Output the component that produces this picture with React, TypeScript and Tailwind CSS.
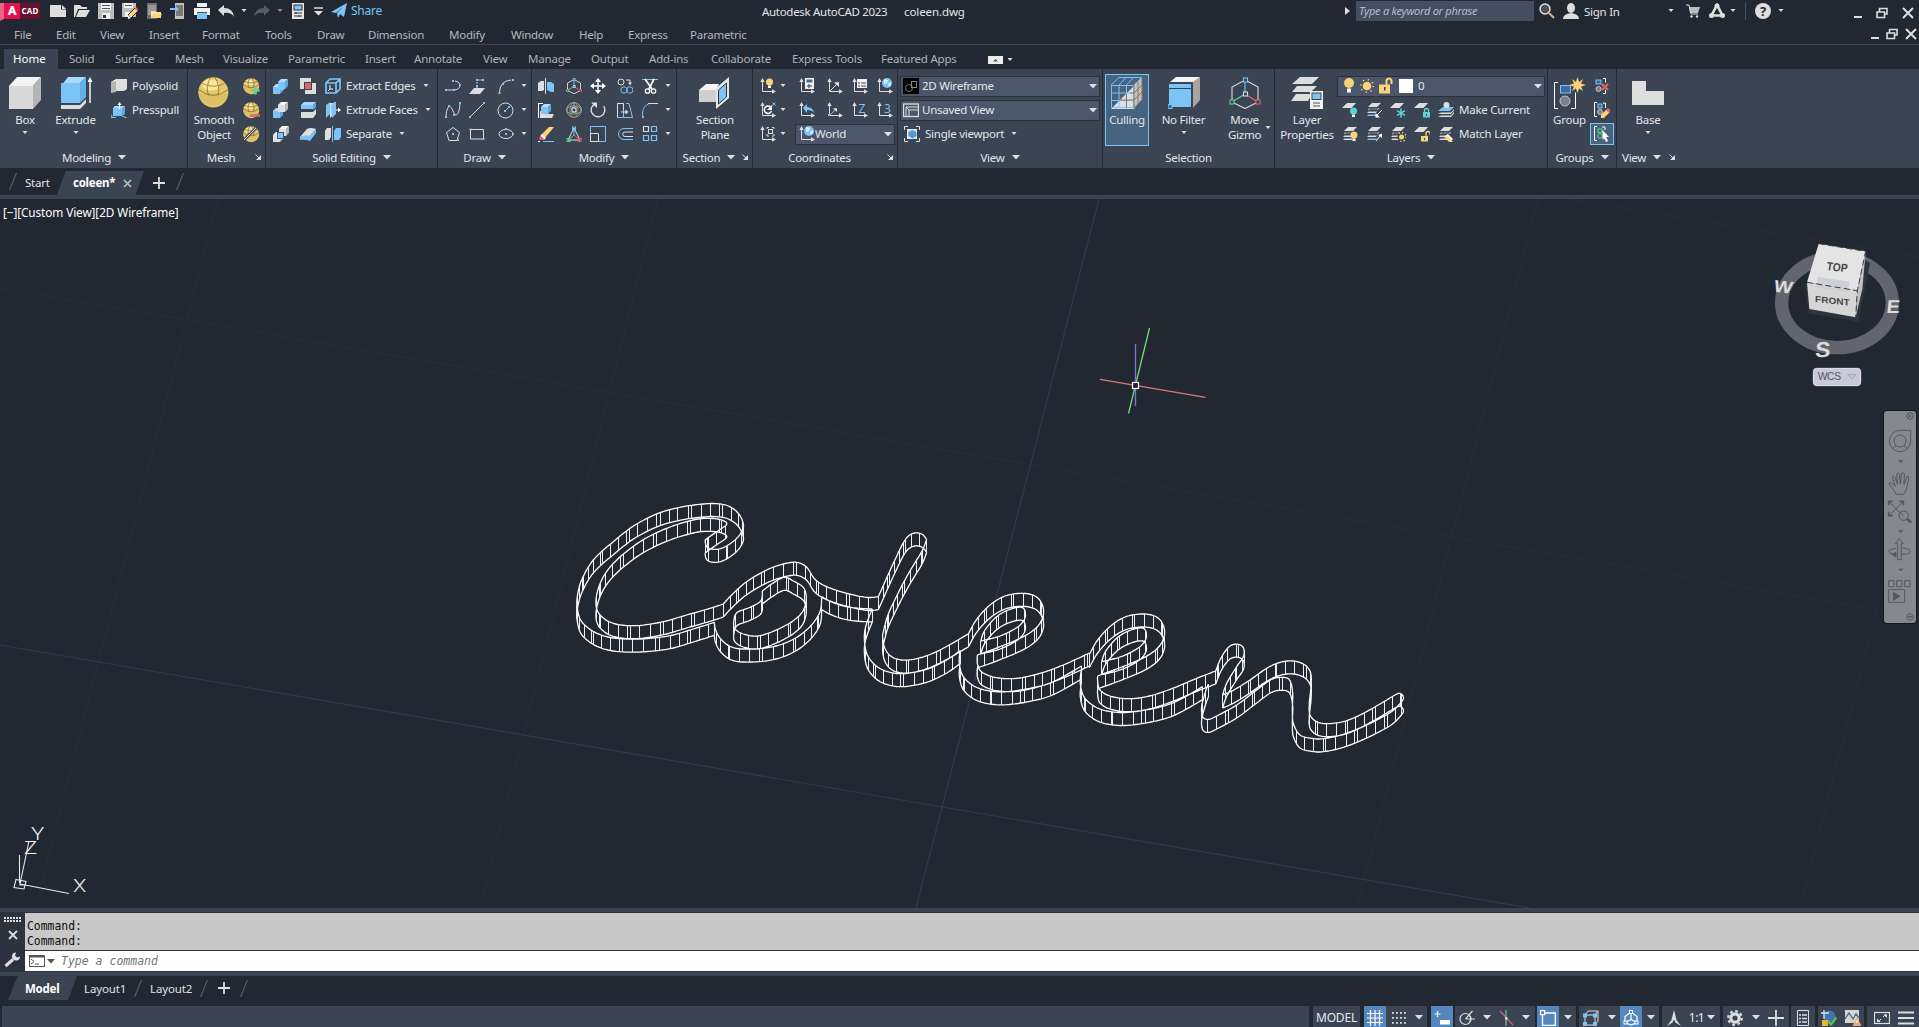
import React from "react";

const B = "#7cc4f8";
const W = "#dedede";
const Y = "#fbd277";
const G = "#63d08c";
const R = "#e0646a";

type P = { children?: React.ReactNode; s?: number; c?: string };

/* ---------- icon primitives ---------- */
const I = ({ children, s = 16, c = "" }: P) => (
  <svg width={s} height={s} viewBox={`0 0 ${s} ${s}`} fill="none" className={`shrink-0 ${c}`}>
    {children}
  </svg>
);
const L = ({ d, c = W, w = 1 }: { d: string; c?: string; w?: number }) => <path d={d} stroke={c} strokeWidth={w} />;
const F = ({ d, c = W }: { d: string; c?: string }) => <path d={d} fill={c} />;
const Dots = ({ p, c = B }: { p: number[][]; c?: string }) => (
  <>
    {p.map(([x, y], i) => (
      <rect key={i} x={x - 1} y={y - 1} width="2" height="2" fill={c} />
    ))}
  </>
);
const Down = ({ big = false }: { big?: boolean }) =>
  big ? (
    <svg width="8" height="5" className="shrink-0"><path d="M0 0h8l-4 4.5z" fill="#dcdfe4" /></svg>
  ) : (
    <svg width="6" height="4" className="shrink-0"><path d="M0.5 0h5l-2.5 3z" fill="#dcdfe4" /></svg>
  );
const Corner = () => (
  <I s={8}><L d="M1.5 1.5l4 4" /><F d="M7 2v5H2z" /></I>
);
const Axes = ({ children }: P) => (
  <I s={17}>
    <L d="M3.5 3v10.500h10" />
    <F d="M3.500 0l2.200 4H1.300zM17 13.500l-4-2.200v4.400z" />
    {children}
  </I>
);
const Sheets = ({ c2 = W }: { c2?: string }) => (
  <>
    <F d="M6 1h9l-4 4H2z" />
    <F d="M4.500 6.200h9l-1.500 1.500H4l-1-.3zM3 6.500l-1 1.500h8l2.500-1.500z" />
    <F d="M2.500 9.500L1 11h8.500l2-1.500z" />
    <F d="M2.500 12.500L1 14h8.500l2-1.500z" c={c2} />
  </>
);
const Sheet1 = () => <F d="M5 1h9l-4.500 5H0z" />;
const Cubelet = ({ x, y, c, t }: { x: number; y: number; c: string; t: string }) => (
  <g transform={`translate(${x} ${y})`}>
    <F d="M0 3h7v7H0z" c={c} />
    <F d="M0 3l3-3h7L7 3z" c={t} />
    <F d="M7 3l3-3v7L7 10z" c={c === W ? "#b8b8b8" : "#5aa9e6"} />
  </g>
);
const Globe = ({ s = 16, children }: P) => (
  <I s={s}>
    <circle cx={s * 0.48} cy={s * 0.48} r={s * 0.47} fill="#e5c869" />
    <path d={`M${s * 0.02} ${s * 0.5}H${s * 0.94}A${s * 0.47} ${s * 0.47} 0 0 1 ${s * 0.02} ${s * 0.5}`} fill="#dcbf66" />
    <ellipse cx={s * 0.4} cy={s * 0.25} rx={s * 0.27} ry={s * 0.18} fill="#fbe596" />
    <path
      d={`M${s * 0.03} ${s * 0.4}Q${s * 0.48} ${s * 0.75} ${s * 0.93} ${s * 0.4}M${s * 0.13} ${s * 0.2}Q${s * 0.48} ${s * 0.38} ${s * 0.83} ${s * 0.2}M${s * 0.4} 0Q${s * 0.22} ${s * 0.3} ${s * 0.33} ${s * 0.58}M${s * 0.52} 0Q${s * 0.72} ${s * 0.3} ${s * 0.62} ${s * 0.58}`}
      stroke="#8a713a" strokeWidth="0.8"
    />
    {children}
  </I>
);
const BlueBall = ({ x = 11, y = 5 }) => (
  <>
    <circle cx={x} cy={y} r="5" fill={B} />
    <path d={`M${x - 3} ${y - 4}l4 1-1 3-3 1zM${x + 1} ${y + 1}l3-2v3l-2 2z`} fill="#d9efff" />
  </>
);
const HexGizmo = ({ s = 16 }: { s?: number }) => {
  const k = s / 32;
  return (
    <svg width={s} height={s} viewBox="0 0 32 32" fill="none" className="shrink-0">
      <g strokeWidth={Math.max(1 / k, 1.2) * 0.9}>
        <path d="M16 3l13 7v15l-13 6.500L3 25V10z" stroke={W} />
        <path d="M16 3v14" stroke={B} /><path d="M16 17L3 25" stroke={G} /><path d="M16 17l13 8" stroke={R} />
        <path d="M14.500 1h4v4h-4z" stroke={B} fill="#3b4453" /><path d="M1 23h4v4H1z" stroke={G} fill="#3b4453" />
        <path d="M27 23h4v4h-4z" stroke={R} fill="#3b4453" /><path d="M14.500 15h4v4h-4z" stroke={W} fill="#3b4453" />
      </g>
    </svg>
  );
};
const Bulb = ({ x, y, c = Y }: { x: number; y: number; c?: string }) => (
  <><circle cx={x} cy={y} r="3.500" fill={c} /><rect x={x - 1.5} y={y + 3.5} width="3" height="2.500" fill="#fff" /></>
);
const Sun = ({ x, y, r = 3 }: { x: number; y: number; r?: number }) => (
  <>
    <circle cx={x} cy={y} r={r} fill={Y} />
    <circle cx={x} cy={y} r={r + 2} stroke={Y} strokeWidth="1.600" strokeDasharray={`1.200 ${((r + 2) * 2 * Math.PI) / 8 - 1.2}`} />
  </>
);
const Lock = ({ x, y, c, open = false }: { x: number; y: number; c: string; open?: boolean }) => (
  <>
    <rect x={x} y={y} width="7" height="5.500" fill={c} />
    <path d={open ? `M${x + 5} ${y}v-2.500a2 2 0 0 1 4 0v1` : `M${x + 1.5} ${y}v-1.500a2 2 0 0 1 4 0v1.500`} stroke={c} strokeWidth="1.300" />
    <rect x={x + 3} y={y + 2} width="1" height="2" fill="#3b4453" />
  </>
);

/* ---------- icon set ---------- */
const ic = {
  box: <I s={32}><F d="M0 9L8 0h24l-8 9z" c="#f3f3f3" /><F d="M0 9h24v23H0z" c="#d9d9d9" /><F d="M24 9l8-9v23l-8 9z" c="#b5b5b5" /></I>,
  extrude: <I s={32}><F d="M0 9l7-9h18l-6 6H0z" c="#a9dbff" /><F d="M0 6h19v20H0z" c={B} /><F d="M19 6l6-6v20l-6 6z" c="#5fb1ee" /><F d="M0 28h19l6-6v4l-6 6H0z" /><L d="M29 4v22" c="#fff" w={1.4} /><F d="M29 0l2.500 5h-5z" c="#fff" /></I>,
  polysolid: <I><F d="M0 4l5-3v11l-5 3z" c="#f3f3f3" /><F d="M5 1h11v10l-3 2H5z" /><F d="M0 4l5-1v11l-5 1z" c="#b5b5b5" /></I>,
  presspull: <I><F d="M2 6h9v8H2z" c={B} /><F d="M11 6l3-2v8l-3 2z" c="#5aa9e6" /><F d="M4 4h10l-3 2H2z" c="#a9dbff" /><L d="M8.500 2v5" c="#fff" /><F d="M8.500 0l2 3h-4z" c="#fff" /><L d="M0 15.500l2-2M0 12v3.500h5M11 14l5 2" c={B} /></I>,
  union: <I><Cubelet x={5} y={1} c={B} t="#b5e0ff" /><Cubelet x={0} y={6} c={B} t="#b5e0ff" /><F d="M5 6h6v6H5z" c={B} /></I>,
  subtract: <I><Cubelet x={0} y={6} c={B} t="#b5e0ff" /><Cubelet x={5} y={0} c={W} t="#f5f5f5" /></I>,
  intersect: <I><Cubelet x={6} y={0} c={W} t="#f5f5f5" /><Cubelet x={0} y={6} c={W} t="#f5f5f5" /><rect x="4.500" y="6.500" width="6" height="6" fill={B} stroke="#2a5f8d" /></I>,
  interfere: <I><rect width="11" height="11" fill={W} /><rect x="5" y="5" width="11" height="11" fill={W} /><rect x="4.500" y="4.500" width="7" height="7" fill={R} stroke="#3b4453" /></I>,
  slice: <I><F d="M1 3l3-3h12l-3 3z" c="#a9dbff" /><F d="M1 3h12v4H1z" c={B} /><F d="M13 3l3-3v5l-3 3z" c="#5aa9e6" /><F d="M1 10h12l3-3v5l-3 4H1z" /></I>,
  thicken: <I><F d="M0 11L7 3q3-2 9 0l-6 7z" /><F d="M0 11q5-3 10-1l6-7v4l-6 8q-5-2-10-1z" c={B} /></I>,
  extractEdges: <I><L d="M1 5h10v10H1zM1 5l4-4h10l-4 4M15 1v10l-4 4" c={B} w={1.700} /><L d="M5 7v4h3M5 11l-2 2" c="#fff" /></I>,
  extrudeFaces: <I><F d="M1 3l4-3v12l-4 4z" c={B} /><F d="M5 1h4v3L7 6v8l-2 2z" c={W} /><F d="M6 4l3-4h2v12l-4 4z" c={B} /><L d="M11 8h4" c="#fff" /><F d="M16 8l-3-2.500v5z" c="#fff" /></I>,
  separate: <I><F d="M0 5l2-3h4v9l-2 3H0z" /><L d="M7.500 0v16" c={B} /><F d="M9 5l2-3h5v9l-2 3H9z" c={B} /></I>,
  polyline: <I><L d="M2 12h6M8 12c9 0 9-8 2-9" /><Dots p={[[1, 12], [9, 12], [8, 3], [15, 7]]} /></I>,
  sweep: <I><F d="M5 10h11l-5 6H0z" /><L d="M8 13V4" /><F d="M8 5l3 4H5z" c="#3b4453" /><Dots p={[[8, 2], [14, 2], [8, 8]]} /><L d="M8 2h5" c={B} /></I>,
  arc: <I><L d="M1.500 14Q2 3 13 2" /><Dots p={[[1.500, 15], [5, 6], [15, 2]]} /></I>,
  spline: <I><L d="M1 14C2 2 6 3 8 9s6 6 7-7" /><Dots p={[[1, 15], [4, 4], [9, 13], [15, 1]]} /></I>,
  line: <I><L d="M2 14L14 2" /><Dots p={[[1, 15], [15, 1]]} /></I>,
  circle: <I s={17}><circle cx="8.500" cy="8.500" r="7.500" stroke={W} /><L d="M8 9l4-4" c={B} /><Dots p={[[8, 9], [12, 5]]} /></I>,
  polygon: <I><path d="M8 1.500l6.500 5-2.500 8H4l-2.500-8z" stroke={W} /><Dots p={[[8, 8], [13, 14]]} /></I>,
  rect: <I><path d="M1.500 3.500h13v9.500h-13z" stroke={W} /><Dots p={[[1.500, 3.500], [14.500, 13]]} /></I>,
  ellipse: <I><ellipse cx="8" cy="8" rx="7" ry="4.500" stroke={W} /><Dots p={[[8, 8], [8, 3], [15, 8]]} /></I>,
  mirror: <I><F d="M0 5l3-2h3v9l-2 1H0z" /><L d="M7.500 0v16" c={W} /><F d="M9 4h4l3 2v8h-3l-4-2z" c={B} /></I>,
  align: <I><L d="M.5 1v15M1 1.500h4" c="#fff" /><F d="M2 15V9h4l2 3h8l-2 4H2z" /><Cubelet x={3} y={2} c={B} t="#b5e0ff" /></I>,
  erase: <I><F d="M3 9l8-8h5l-9 11z" c={Y} /><F d="M3 9l4 4-1 1H2l-1-2z" c={R} /><F d="M4 8l4 4-1.500 1.500L2.500 9.500z" c="#fff" /><L d="M0 15.500h2" c="#fff" /><L d="M5 15.500h11" c={B} /></I>,
  rot3d: <I><circle cx="8" cy="8" r="7.300" stroke="#aaa" /><ellipse cx="8" cy="8" rx="4" ry="7.300" stroke={R} /><ellipse cx="8" cy="8" rx="7.300" ry="4" stroke={G} /><rect x="6" y="6" width="4" height="4" stroke="#fff" /><L d="M8 0v6" c={B} /></I>,
  scale3d: <I><L d="M8 2L2 14h12z" /><L d="M8 2v7" c={B} /><L d="M8 9l-6 5" c={G} /><L d="M8 9l6 5" c={R} /><rect x="6.500" y="1" width="3" height="3" stroke={B} /><rect x="1" y="12.500" width="3" height="3" stroke={G} /><rect x="12" y="12.500" width="3" height="3" stroke={R} /></I>,
  move: <I><L d="M8 2v12M2 8h12" c="#fff" w={1.400} /><F d="M8 0l3 4H5zM8 16l3-4H5zM0 8l4-3v6zM16 8l-4-3v6z" c="#fff" /></I>,
  rotate: <I><path d="M4 2.500A6.800 6.800 0 1 0 12 2.500" transform="rotate(20 8 8)" stroke={W} strokeWidth="1.400" /><F d="M1 .5h6v5.500z" /></I>,
  scale: <I><path d="M.5.500h15v15H.5z" stroke={B} /><path d="M.5 7.500h8v8h-8z" stroke={W} fill="#3b4453" /></I>,
  copy: <I><circle cx="4" cy="4" r="3" stroke={W} /><L d="M9 2h4v3" /><F d="M13 7.500l-2-3h4z" /><circle cx="7" cy="12" r="3.200" stroke={B} /><circle cx="12.800" cy="12" r="3.200" stroke={B} /></I>,
  stretch: <I><path d="M.5 1.500h6v14h-6zM9 1.500h3l3.500 14H6" stroke={B} /><path d="M.5 15.500v-14h6V8" stroke={W} /><L d="M4 10h6" /><F d="M11.500 10l-3-2.500v5z" /></I>,
  offset: <I><path d="M16 2.500H7a5.500 5.500 0 0 0 0 11h9" stroke={B} /><path d="M16 6H8a2.200 2.200 0 0 0 0 4.500h8" stroke={W} /></I>,
  trim: <I><L d="M0 1.500h16" c={B} /><path d="M3 1l7 10M12 1L7 11" stroke="#fff" strokeWidth="1.700" /><circle cx="5.500" cy="13" r="2.200" stroke="#fff" strokeWidth="1.300" /><circle cx="11.500" cy="13" r="2.200" stroke="#fff" strokeWidth="1.300" /></I>,
  fillet: <I><L d="M.5 15V11Q1 4 7 1.500" c={B} /><L d="M6 1.500h10" /><Dots p={[[.8, 15]]} /></I>,
  array: <I><path d="M1.500.500h5v5h-5zM9.500.500h5v5h-5zM1.500 9.500h5v5h-5zM9.500 9.500h5v5h-5z" stroke={B} strokeWidth="1.200" /><path d="M1.500.500h5v5h-5z" stroke={W} /></I>,
  section: <I s={32}><F d="M0 13L7 7h13l-3 6z" c="#f5f5f5" /><F d="M0 13h17v12H0z" c="#cfcfcf" /><F d="M17 11L30 0v21L17 32z" c="#e8e8e8" /><F d="M19.500 13L27.500 6v14l-8 7z" c={B} /><path d="M19.500 13L27.500 6v14l-8 7z" stroke="#333" /></I>,
  culling: <I s={32}><F d="M0 32l20-20 11-12v22l-8 10z" c="#dedede" /><F d="M23 8l8-8v22l-8 9z" c="#c9c2bb" /><path d="M.5 8.500h22v22H.5zM8 8v23M15.500 8v23M0 16h23M0 23.500h23M0 8l8-7.500h23L23 8M8 8l7-7.500M15.500 8l7-7.500M23 16l8-8M23 23l8-8" stroke={B} /><path d="M15.500 17v14M23 8v23M8 23h15M19 16h4M31 .5v22L23 31M27 4v23M23 23l8-8M23 16l8-8" stroke="#7e7671" /></I>,
  nofilter: <I s={32}><F d="M2 5l6-5h24l-6 5z" c="#f5f5f5" /><F d="M25 5l7-5v23l-7 8z" c="#aaa49f" /><F d="M1 7h22v4H1z" c={B} /><F d="M1 12h22v18H1z" c={B} /><rect x="0" y="27.500" width="4" height="4" fill="#3b6c99" stroke={B} /></I>,
  layerProps: <I s={32}><F d="M9 0h19l-7 7H1z" /><F d="M6 9h20l-6 6H1z" /><F d="M5 17h16l-4 7H0z" /><rect x="19" y="14" width="13" height="18" fill="#f2f2f2" /><rect x="21" y="16" width="9" height="6.500" fill={B} stroke="#444" /><L d="M22 26h7M22 29h7" c="#555" /></I>,
  groupBig: <I s={32}><L d="M4 5.500H.5v26H4M17 31.500h4.500v-16" c="#fff" /><rect x="6.500" y="8.500" width="10" height="7.500" fill="#3d6c9c" stroke={B} /><circle cx="11" cy="24" r="5" fill="#7a7f88" stroke="#c0c4ca" /><path d="M23.500 0l1.600 5 4-3-2.100 4.500 5 1.500-5 1.700 2.100 4.300-4-2.500-1.600 4.500-1.600-4.500-4 2.500 2.100-4.300-5-1.700 5-1.500L17.900 2l4 3z" fill={Y} /></I>,
  base: <I s={32}><F d="M0 4h14v10h18v14H0z" /></I>,
  makeCurrent: <I><F d="M5 5h11l-4 4H0z" c={B} /><F d="M3 10.500h10l3-3.500v1.500L13 12H0zM3 13.500h10l3-3.500v1.500L13 15H0z" /><circle cx="8.500" cy="3" r="3" fill={W} /></I>,
  matchLayer: <I><Sheets /><F d="M7 10l3-2 5 5-3 3z" c="#fff" /><F d="M6 11l5 5h4l-6-6z" c={Y} /></I>,
};

const layerRow1 = [
  <I><Sheet1 /><Bulb x={11.500} y={9} c="#5fd3d9" /></I>,
  <I><Sheets c2={B} /><L d="M16 8l-5 5" c="#fff" /><F d="M9.500 11v4.500H14z" c="#fff" /></I>,
  <I><Sheet1 /><g stroke="#5fd3d9" strokeWidth="1.500"><path d="M11 6.500v9M7 8.700l8 4.600M15 8.700l-8 4.600" /></g></I>,
  <I><Sheet1 /><Lock x={9} y={10} c="#5fd3d9" /></I>,
];
const layerRow2 = [
  <I><Sheets /><Bulb x={12} y={9} /></I>,
  <I><Sheets c2={B} /><L d="M10 15l4-5" c="#fff" /><F d="M16 7.500v4.500l-4-3z" c="#fff" /></I>,
  <I><Sheets /><circle cx="11.500" cy="11" r="5" fill="#3b4453" /><Sun x={11.500} y={11} r={2.500} /></I>,
  <I><Sheet1 /><Lock x={7} y={10} c={Y} open /></I>,
];

/* ---------- ribbon building blocks ---------- */
const Panel = ({ w, label, arrow, corner, children }: { w: string; label: string; arrow?: boolean; corner?: boolean; children: React.ReactNode }) => (
  <section className={`${w} flex shrink-0 flex-col border-r border-[#242a34] pt-[5px]`}>
    <div className="flex h-[72px]">{children}</div>
    <div className="flex h-[22px] items-center">
      <span className="flex flex-1 items-center justify-center gap-[7px]">
        {label}
        {arrow && <Down big />}
      </span>
      {corner && <span className="mr-[3px]"><Corner /></span>}
    </div>
  </section>
);
const Big = ({ w, icon, a, b, arrow, on }: { w: string; icon: React.ReactNode; a: string; b?: string; arrow?: boolean; on?: boolean }) => (
  <div className={`${w} flex h-[72px] shrink-0 flex-col items-center pt-[3px] leading-[15px] ${on ? "bg-[#46637f] outline outline-[#7cc4f8] -outline-offset-1" : ""}`}>
    {icon}
    <span className="mt-[3px] whitespace-nowrap">{a}</span>
    {b && <span>{b}</span>}
    {arrow && <span className="mt-[4px]"><Down /></span>}
  </div>
);
const Cell = ({ children, c = "" }: { children?: React.ReactNode; c?: string }) => (
  <span className={`flex items-center justify-center ${c}`}>{children}</span>
);
const Item = ({ icon, t, arrow, gap = "gap-[5px]" }: { icon: React.ReactNode; t: string; arrow?: boolean; gap?: string }) => (
  <span className={`flex items-center whitespace-nowrap ${gap}`}>
    {icon}
    <span className="pb-[2px]">{t}</span>
    {arrow && <span className="ml-[2px]"><Down /></span>}
  </span>
);
const Combo = ({ w, children }: { w: string; children: React.ReactNode }) => (
  <div className={`${w} flex h-[21px] items-center border border-[#2a313d] bg-[#4b566a] pl-[2px] pr-[2px]`}>
    {children}
    <span className="ml-auto"><Down big /></span>
  </div>
);

const menus: [string, string][] = [
  ["File", "w-[42px]"], ["Edit", "w-[44px]"], ["View", "w-[49px]"], ["Insert", "w-[53px]"], ["Format", "w-[63px]"], ["Tools", "w-[52px]"],
  ["Draw", "w-[51px]"], ["Dimension", "w-[81px]"], ["Modify", "w-[62px]"], ["Window", "w-[68px]"], ["Help", "w-[49px]"], ["Express", "w-[62px]"], ["Parametric", "w-[80px]"],
];
const tabs: [string, string][] = [
  ["Solid", "w-[46px]"], ["Surface", "w-[60px]"], ["Mesh", "w-[48px]"], ["Visualize", "w-[65px]"], ["Parametric", "w-[77px]"], ["Insert", "w-[49px]"],
  ["Annotate", "w-[69px]"], ["View", "w-[45px]"], ["Manage", "w-[63px]"], ["Output", "w-[58px]"], ["Add-ins", "w-[62px]"], ["Collaborate", "w-[81px]"],
  ["Express Tools", "w-[89px]"], ["Featured Apps", "w-[107px]"],
];

const WinButtons = ({ gap }: { gap: string }) => (
  <div className={`flex items-center ${gap}`}>
    <svg width="8" height="12"><rect y="9" width="8" height="2" fill={W} /></svg>
    <svg width="12" height="12" fill="none"><path d="M1 5h7.500v5.500H1zM3.500 4.500V1.500h7.500v5.500H9" stroke={W} strokeWidth="1.600" /></svg>
    <svg width="12" height="12" fill="none"><path d="M1 1l10 10M11 1L1 11" stroke={W} strokeWidth="2" /></svg>
  </div>
);

const TitleBar = () => (
  <header className="flex h-[22px] items-center text-[#e3e5e8]">
    <div className="flex h-[16px] w-[46px] items-center font-bold leading-none text-white">
      <svg width="4" height="18" className="mt-[2px] shrink-0"><path d="M0 0h4v16l-4 2z" fill="#e8668a" /></svg>
      <span className="flex h-[16px] w-[16px] items-center justify-center bg-[#e5104c] pb-px font-['Roboto',sans-serif] text-[13px] font-black">A</span>
      <span className="flex h-[16px] w-[20px] items-center justify-center bg-[#65102c] pb-px text-[8px] tracking-[0.200px]">CAD</span>
    </div>
    <Cell c="w-[24px]"><I><F d="M0 2h11v4.500h5V14H0z" /><F d="M12 2l4 4h-4z" /></I></Cell>
    <Cell c="w-[24px]"><I><F d="M0 2h6l2 2h5v2H4L1 14H0z" /><F d="M5 7h11l-4 7H2z" /></I></Cell>
    <Cell c="w-[24px]"><I><F d="M0 0h16v16H0z" c="#bdbdbd" /><F d="M3 0h10v7H3z" c="#f2f2f2" /><F d="M4 10h8v6H4z" c="#f2f2f2" /><F d="M5 12h3v3H5z" c="#333" /><L d="M4 2.500h8M4 5.500h8" c="#555" /></I></Cell>
    <Cell c="w-[24px]"><I><F d="M0 0h14v14H0z" c="#bdbdbd" /><F d="M2 0h9v5H2zM3 9h5v5H3z" c="#f2f2f2" /><L d="M3 2.500h7" c="#555" /><path d="M6 12l7-7 3 3-7 7z" fill={Y} stroke="#222831" /><F d="M6 12l3 3-3 1z" c="#fff" /><F d="M12.500 5.500l1.500-1.500 3 3-1.500 1.500z" c={R} /></I></Cell>
    <Cell c="w-[24px]"><I><F d="M1 0h10v16H1z" c="#6d6d6d" /><F d="M2 2h8v10H2z" c="#999" /><F d="M5 8h4l1 1h5v6H5z" c="#f8e2ae" /><F d="M7 11h9l-2 4H5z" c={Y} /></I></Cell>
    <Cell c="w-[24px]"><I><F d="M5 0h9v16H5z" c="#c9c2bb" /><F d="M6 2h7v11H6z" c="#7d7873" /><L d="M0 6h6" c={B} w={2} /><F d="M9 6L5 2.500v7z" c={B} /></I></Cell>
    <Cell c="w-[24px]"><I><F d="M3 0h10v4H3zM0 5h16v7H0z" c="#f0f0f0" /><F d="M3 9h10v7H3z" c={B} /><path d="M3 9.500h10" stroke="#555" /></I></Cell>
    <Cell c="w-[24px]"><I><F d="M0 7l6-5v3q9 0 10 9-3-5-10-4v3z" /></I></Cell>
    <Cell c="w-[12px]"><Down /></Cell>
    <Cell c="w-[24px]"><I><F d="M16 7l-6-5v3Q1 5 0 14q3-5 10-4v3z" c="#555c66" /></I></Cell>
    <Cell c="w-[12px] opacity-60"><Down /></Cell>
    <Cell c="w-[24px]"><I><F d="M2 0h12v16H2z" c="#e6e6e6" /><rect x="4" y="2" width="8" height="5" fill={B} stroke="#333" /><L d="M4 10h8M4 13h8M6 9v2M9 12v2" c="#333" /></I></Cell>
    <Cell c="w-[16px]"><I s={9}><L d="M0 1h9" w={1.500} /><F d="M0 4h9L4.500 8.500z" /></I></Cell>
    <Cell c="w-[25px]"><I><F d="M0 9L16 0l-3 14-4-3-2 4-1-5 6-6-7 6z" c={B} /></I></Cell>
    <span className="w-[411px] pb-px text-[12px] text-[#7cc4f8]">Share</span>
    <span className="w-[142px] whitespace-nowrap pt-px tracking-[-0.300px]">Autodesk AutoCAD 2023</span>
    <span className="w-[441px] pt-px tracking-[-0.100px]">coleen.dwg</span>
    <svg width="5" height="8" className="mr-[6px]"><path d="M0 0l5 4-5 4z" fill={W} /></svg>
    <div className="flex h-[20px] w-[178px] items-center bg-[#454d60] pb-px pl-[3px] text-[11px] italic text-[#b7bcc6]">Type a keyword or phrase</div>
    <Cell c="ml-[5px] w-[16px]"><I><circle cx="6" cy="6" r="5" stroke={W} strokeWidth="1.500" fill="#4b525c" /><path d="M10 10l5 5" stroke="#d7b48a" strokeWidth="2" /></I></Cell>
    <Cell c="ml-[8px] w-[16px]"><I><ellipse cx="8" cy="5" rx="4" ry="5" fill={W} /><F d="M0 16q0-5 8-6 8 1 8 6z" /></I></Cell>
    <span className="ml-[5px] w-[84px] pt-px">Sign In</span>
    <Down />
    <Cell c="ml-[12px] w-[14px]"><I s={14}><F d="M3 3h11l-2 6H4z" c="#bdbdbd" /><L d="M0 1h3l2 9h7" /><circle cx="5.500" cy="12.500" r="1.200" fill={W} /><circle cx="11" cy="12.500" r="1.200" fill={W} /></I></Cell>
    <Cell c="ml-[9px] w-[16px]"><I><path d="M8 2L2.500 12.500h11z" stroke={W} strokeWidth="2.600" /><circle cx="8" cy="3" r="2.500" fill={W} /><circle cx="2.500" cy="12.500" r="2.500" fill={W} /><circle cx="13.500" cy="12.500" r="2.500" fill={W} /></I></Cell>
    <span className="ml-[5px] flex w-[15px]"><Down /></span>
    <span className="h-[18px] w-[10px] border-l border-[#4a505b]" />
    <span className="flex size-[16px] items-center justify-center rounded-full bg-[#dedede] text-[13px] font-bold leading-none text-[#222831]">?</span>
    <span className="ml-[7px] flex w-[76px]"><Down /></span>
    <span className="pt-[3px]"><WinButtons gap="gap-[14px]" /></span>
  </header>
);

const axisLetter = "font-['Open_Sans',sans-serif] text-[12px]";
const axesGrid = [
  <Axes><Bulb x={10.500} y={4} /></Axes>, "a",
  <Axes><rect x="7" y="0" width="9" height="11" fill="#f2f2f2" /><rect x="8.500" y="1.500" width="6" height="3" fill="#3d6c9c" /><L d="M9 8h5M11 6v4" c="#333" /></Axes>,
  <Axes><L d="M4 13l7-7" /><F d="M13 4v5L8 4.500z" /></Axes>,
  <Axes><rect x="6" y="1" width="10" height="9" fill="#f2f2f2" /><L d="M7 5h2M10 5h5M7 8h2M10 8h5" c="#444" /></Axes>,
  <Axes><BlueBall /></Axes>,
  <Axes><path d="M11.500 5a3.700 3.700 0 1 0 1 4" stroke="#fff" strokeWidth="1.500" /><F d="M13 3v5H8z" c="#fff" /><L d="M13.500.5l3 3M16.500.5l-3 3" c={B} /></Axes>, "a",
  <Axes><F d="M5 6l4-4v3q6 0 7 6-2-3-7-3v3z" c={B} /></Axes>,
  <Axes><L d="M4 13l5-5" c={B} /><F d="M11 6v4L7 6.500z" /><Dots p={[[3, 13]]} /></Axes>,
  <Axes><text x="7.500" y="11" fill={B} className={axisLetter}>Z</text></Axes>,
  <Axes><text x="8" y="11" fill={B} className={axisLetter}>3</text></Axes>,
];

const Ribbon = () => (
  <div className="flex h-[99px] bg-[#3b4453] pl-px text-[#e3e6ea]">
    <Panel w="w-[187px]" label="Modeling" arrow>
      <Big w="w-[48px]" icon={ic.box} a="Box" arrow />
      <Big w="w-[53px]" icon={<span className="ml-[3px]">{ic.extrude}</span>} a="Extrude" arrow />
      <div className="ml-[9px] grid grid-rows-3">
        <Item icon={ic.polysolid} t="Polysolid" />
        <Item icon={ic.presspull} t="Presspull" />
      </div>
    </Panel>
    <Panel w="w-[78px]" label="Mesh" corner>
      <Big w="w-[52px]" icon={<Globe s={32} />} a="Smooth" b="Object" />
      <div className="ml-[3px] grid grid-rows-3 items-center">
        <Globe s={17}><L d="M12.500 8.500v8M8.500 12.500h8" c={G} w={2.500} /></Globe>
        <Globe s={17}><L d="M7 13.500h10" c={R} w={2.500} /></Globe>
        <Globe s={17}><L d="M1 14L13 2" c="#3b4453" w={3} /><L d="M1 14L13 2" c="#eee" /></Globe>
      </div>
    </Panel>
    <Panel w="w-[172px]" label="Solid Editing" arrow>
      <div className="ml-[7px] grid grid-cols-[17px_36px] grid-rows-3 items-center">
        {ic.union}<Cell>{ic.interfere}</Cell>{ic.subtract}<Cell>{ic.slice}</Cell>{ic.intersect}<Cell>{ic.thicken}</Cell>
      </div>
      <div className="-ml-px grid grid-rows-3">
        <Item icon={ic.extractEdges} t="Extract Edges" arrow />
        <Item icon={ic.extrudeFaces} t="Extrude Faces" arrow />
        <Item icon={ic.separate} t="Separate" arrow />
      </div>
    </Panel>
    <Panel w="w-[94px]" label="Draw" arrow>
      <div className="ml-[3px] grid grid-cols-[24px_24px_33px_4px] grid-rows-3 place-items-center">
        {ic.polyline}{ic.sweep}{ic.arc}<Down />
        {ic.spline}{ic.line}{ic.circle}<Down />
        {ic.polygon}{ic.rect}{ic.ellipse}<Down />
      </div>
    </Panel>
    <Panel w="w-[145px]" label="Modify" arrow>
      <div className="ml-[2px] grid grid-cols-[24px_31px_17px_38px_12px_23px] grid-rows-3 place-items-center">
        {ic.mirror}<HexGizmo />{ic.move}{ic.copy}{ic.trim}<Down />
        {ic.align}{ic.rot3d}{ic.rotate}{ic.stretch}{ic.fillet}<Down />
        {ic.erase}{ic.scale3d}{ic.scale}{ic.offset}{ic.array}<Down />
      </div>
    </Panel>
    <Panel w="w-[76px]" label="Section" arrow corner>
      <Big w="w-[76px]" icon={ic.section} a="Section" b="Plane" />
    </Panel>
    <Panel w="w-[145px]" label="Coordinates" corner>
      <div className="flex flex-col">
        <div className="ml-[6px] grid h-[48px] grid-cols-[17px_14px_32px_25px_25px_24px] grid-rows-2 place-items-center">
          {axesGrid.map((x, i) => <React.Fragment key={i}>{x === "a" ? <Down /> : x}</React.Fragment>)}
        </div>
        <div className="flex h-[24px] items-center">
          <span className="ml-[6px] mr-[4px]"><Axes><path d="M8 3V1.500h2M13 1.500h2V3M15 8v2h-2M10 10H8V8" stroke={W} /><rect x="9.500" y="3.500" width="4" height="4" stroke={W} /></Axes></span>
          <Down />
          <span className="w-[9px]" />
          <Combo w="w-[100px]"><Axes><BlueBall /></Axes><span className="pb-[2px]">World</span></Combo>
        </div>
      </div>
    </Panel>
    <Panel w="w-[205px]" label="View" arrow>
      <div className="ml-[2px] grid grid-rows-3 items-center">
        <Combo w="w-[200px]">
          <svg width="16" height="16" fill="none" className="bg-black"><circle cx="6" cy="10" r="3.500" stroke="#777" /><rect x="8.500" y="3.500" width="5" height="6" stroke="#888" /></svg>
          <span className="ml-[3px] pb-[2px]">2D Wireframe</span>
        </Combo>
        <Combo w="w-[200px]">
          <I><rect x=".5" y="2" width="15" height="12.500" stroke={W} strokeWidth="1.300" /><L d="M3 14V5h12M6 14V8h9M3 5l3 3" /></I>
          <span className="ml-[3px] pb-[2px]">Unsaved View</span>
        </Combo>
        <span className="ml-[4px]"><Item icon={<I><L d="M.5 4V.5H4M12 .5h3.500V4M15.500 12v3.500H12M4 15.500H.5V12" /><rect x="3" y="3" width="10" height="10" fill="#e6e6e6" /><path d="M4.500 6l4-2 4 2v4l-4 2.500-4-2.500z" fill="#4f9bd6" /></I>} t="Single viewport" arrow /></span>
      </div>
    </Panel>
    <Panel w="w-[172px]" label="Selection">
      <Big w="ml-[2px] w-[44px]" icon={ic.culling} a="Culling" on />
      <Big w="w-[69px]" icon={ic.nofilter} a="No Filter" arrow />
      <Big w="w-[53px]" icon={<HexGizmo s={32} />} a="Move" b="Gizmo" />
      <span className="-ml-[6px] mt-[52px]"><Down /></span>
    </Panel>
    <Panel w="w-[273px]" label="Layers" arrow>
      <Big w="w-[64px]" icon={ic.layerProps} a="Layer" b="Properties" />
      <div className="-ml-[2px] grid grid-rows-3 items-center">
        <Combo w="w-[208px]">
          <I s={18}><circle cx="9" cy="6" r="5" fill={Y} /><rect x="7" y="11.500" width="4" height="4" fill="#fff" /></I>
          <I s={18}><Sun x={9} y={9} r={4.300} /></I>
          <I s={18}><rect x="3" y="7.500" width="11" height="9" fill={Y} /><path d="M10.500 8V4a2.500 2.500 0 0 1 5 0v3" stroke={Y} strokeWidth="2" /><rect x="8" y="10" width="1.500" height="3.500" fill="#3b4453" /></I>
          <span className="ml-[5px] size-[14px] bg-white" />
          <span className="ml-[5px] pb-px">0</span>
        </Combo>
        <div className="ml-[5px] flex items-center gap-[8px]">{layerRow1.map((x, i) => <React.Fragment key={i}>{x}</React.Fragment>)}<Item icon={ic.makeCurrent} t="Make Current" /></div>
        <div className="ml-[5px] flex items-center gap-[8px]">{layerRow2.map((x, i) => <React.Fragment key={i}>{x}</React.Fragment>)}<Item icon={ic.matchLayer} t="Match Layer" /></div>
      </div>
    </Panel>
    <Panel w="w-[69px]" label="Groups" arrow>
      <Big w="w-[43px]" icon={ic.groupBig} a="Group" />
      <div className="-ml-px grid w-[24px] grid-rows-3 place-items-center">
        <I><L d="M9 .5h2.500v4M11.500 12v3.500H9" c="#fff" /><rect x="2" y="2" width="5" height="4" fill="#3d6c9c" stroke={B} /><circle cx="4.500" cy="11" r="2.500" fill="#7a7f88" stroke="#c0c4ca" /><path d="M8 6l6 6M14 6l-6 6" stroke={R} strokeWidth="2.300" /></I>
        <I><L d="M3 .5H.5v14H3M9 1h2.500v5" c="#fff" /><rect x="4" y="2" width="4" height="4" fill="#3d6c9c" stroke={B} /><circle cx="6" cy="10" r="2.500" fill="#7a7f88" stroke="#c0c4ca" /><F d="M7 13l6-6 3 3-6 6H7z" c={Y} /><F d="M12 8l2-2 3 3-2 2z" c={R} /></I>
        <span className="flex h-[22px] w-[24px] items-center justify-center border border-[#7cc4f8] bg-[#46637f]">
          <I><L d="M3 .5H.5v14H3M8 1h3v3" c="#fff" /><rect x="4" y="3" width="4" height="3.500" fill="#2d7b52" stroke={G} /><circle cx="6" cy="10" r="2.300" stroke={G} /><F d="M8.500 4l6.500 7h-3l2 4-2 1-2-4-1.500 2z" c="#fff" /></I>
        </span>
      </div>
    </Panel>
    <div className="flex w-[61px] flex-col pt-[5px]">
      <Big w="w-[62px]" icon={ic.base} a="Base" arrow />
      <div className="flex h-[22px] items-center gap-[7px] pl-[5px]">View<Down big /><Corner /></div>
    </div>
  </div>
);

const Slash = ({ c = "" }) => <svg width="8" height="17" className={`shrink-0 ${c}`}><path d="M7.500 0L.5 17" stroke="#565e69" strokeWidth="1.200" /></svg>;

/* ---------- wireframe lettering ---------- */
type Pt = [number, number];
const parse = (s: string, dx = 0, dy = 0): Pt[] => s.split(" ").map((p) => { const [x, y] = p.split(",").map(Number); return [(x + dx) / 3, (y + dy) / 3]; });
const E = 1170, EY = 240;

const eTop = "55,222 80,178 120,135 165,108 215,100 255,108 276,132 280,165 262,200 220,230 150,260 82,285";
const eBase = "30,272 28,310 40,350 75,380 120,393 170,395 240,385 310,365 395,318";
const eTail = "82,285 83,315 98,338 140,353 200,355 270,340 340,315 418,279";
const eEye = "92,243 105,210 140,170 180,148 215,142 226,158 222,180 200,203 150,228 92,243";

const runs: Pt[][] = [
  parse("435,180 440,200 460,208 490,203 525,180 545,155 550,132 535,100 505,78 470,71 430,72 370,80 300,98 225,135 160,185 100,240 65,300 52,350 52,385 65,425 105,457 160,474 240,477 330,467 400,447 463,427"),
  parse("463,427 467,450 485,480 520,503 575,507 640,500 700,478 750,440 780,395 785,350"),
  parse("785,350 820,368 870,382 937,387"),
  parse("937,387 920,430 913,470 920,520 945,555 980,574 1030,581 1100,568 1160,540 1200,512"),
  parse(eBase, E, EY),
  parse(eBase, E + 363, EY + 62),
  parse("775,372 765,400 755,440 758,470 775,478 800,468 860,435 920,390 965,358 1000,352 1020,362 1028,400 1027,450 1030,490 1050,525 1085,535 1120,536 1180,523 1250,495 1320,458 1355,425 1360,410 1350,400 1335,405 1290,432 1230,465 1180,485 1130,491 1100,485 1080,465 1078,430 1083,380 1082,340 1065,315 1030,303 990,307 950,325 900,360 855,388 818,405", E, EY),
  parse("818,405 830,370 860,320 880,290 881,265 865,253 840,258 815,290 797,333", E, EY),
  parse("797,333 740,355 660,388 590,410 530,416 480,408 450,390 443,365 443,347", E, EY),
  parse(eTop, E + 363, EY + 62),
  parse(eTail, E, EY),
  parse(eTop, E, EY),
  parse("1225,462 1130,515 1060,538 1010,537 980,515 968,475 975,435 990,390 1040,290 1085,215 1100,178"),
  parse("1100,178 1085,162 1060,160 1035,180 1000,250 955,350"),
  parse("955,350 920,352 860,340 800,320 765,298 740,262 710,247 670,252 620,270 560,305 515,345 490,372"),
  parse("490,372 440,388 380,405 310,425 230,437 160,430 118,402 108,360 125,300 165,245 240,185 320,145 400,120 450,115 485,120 500,133 470,155 435,180"),
  parse("607,333 635,312 672,292 700,303 732,325 738,365 720,405 670,440 600,467 550,462 524,445 522,420 532,397 570,382 603,362 607,333"),
  parse(eEye, E, EY),
  parse(eEye, E + 363, EY + 62),
];

const smooth = (p: Pt[]): Pt[] => {
  const out: Pt[] = [];
  for (let i = 0; i < p.length - 1; i++) {
    const a = p[Math.max(i - 1, 0)], b = p[i], c = p[i + 1], d = p[Math.min(i + 2, p.length - 1)];
    for (let k = 0; k < 8; k++) {
      const t = k / 8;
      const f = (n: 0 | 1) => 0.5 * (2 * b[n] + (c[n] - a[n]) * t + (2 * a[n] - 5 * b[n] + 4 * c[n] - d[n]) * t * t + (3 * b[n] - a[n] - 3 * c[n] + d[n]) * t * t * t);
      out.push([f(0), f(1)]);
    }
  }
  out.push(p[p.length - 1]);
  return out;
};
const DEPTH = 13;
let edges = "", risers = "";
runs.forEach((r) => {
  const s = smooth(r);
  const line = (dy: number) => "M" + s.map(([x, y]) => `${x.toFixed(1)} ${(y + dy).toFixed(1)}`).join("L");
  edges += line(0) + line(DEPTH);
  const rise = (x: number, y: number) => { risers += `M${Math.floor(x) + 0.5} ${y.toFixed(1)}v${DEPTH}`; };
  rise(s[0][0], s[0][1]);
  let acc = 0, n = 0;
  for (let i = 1; i < s.length; i++) {
    acc += Math.hypot(s[i][0] - s[i - 1][0], s[i][1] - s[i - 1][1]);
    const next = n % 4 === 3 ? 1.6 : 8.6;
    if (acc >= next) { rise(s[i][0], s[i][1]); acc = 0; n++; }
  }
});

const Drawing = () => (
  <svg width="1919" height="709" viewBox="0 199 1919 709" fill="none" className="block">
    <g stroke="#272e38">
      <path d="M0 288L1919 617M1570 199L1919 257M658 199L480 908M218 199L35 908M1538 199L1357 908M1982 199L1800 908" />
    </g>
    <path d="M1099 199L916 908M0 645L1530 908" stroke="#323a48" strokeWidth="1.200" />
    <g transform="translate(560 480)" stroke="#fff">
      <path d={edges} strokeWidth="1.300" />
      <path d={risers} strokeWidth="1" stroke="#efefef" />
    </g>
    <g strokeWidth="1.300">
      <path d="M1149.500 328L1128.500 413.500" stroke="#6fdc78" />
      <path d="M1100 379.300l105.500 18" stroke="#e0747a" />
      <path d="M1135.500 344v62" stroke="#7f74e0" />
      <rect x="1132.500" y="382.500" width="6" height="6" fill="#222831" stroke="#fff" strokeWidth="1.200" />
    </g>
    <g stroke="#e8e8e8" strokeWidth="1.100">
      <path d="M19.500 855v28M20 884l9-43M20 884l49 9.500M16 879.500l10 2-2 7.500-10-1.500zM20 881v4h4" />
    </g>
    <g fill="#f2f2f2" fontFamily="Roboto" fontWeight="300" fontSize="18">
      <text x="31" y="840" textLength="13" lengthAdjust="spacingAndGlyphs">Y</text>
      <text x="24" y="853.500" textLength="13" lengthAdjust="spacingAndGlyphs">Z</text>
      <text x="73" y="892" textLength="13" lengthAdjust="spacingAndGlyphs">X</text>
    </g>
  </svg>
);

const ViewCube = () => (
  <svg width="179" height="175" viewBox="0 0 537 525" className="absolute left-[1740px] top-[21px]">
    <ellipse cx="291" cy="248" rx="166" ry="135" fill="none" stroke="#62646e" strokeWidth="40" />
    <path d="M195 190l150 100 30-170 15 10-35 175-150-25z" fill="#2d343e" />
    <path d="M236 71l141 23-25 118-151-25z" fill="#e4e4e4" />
    <path d="M201 187l151 25-5 80-139-25z" fill="#d6d6d6" />
    <path d="M377 94l-25 118-5 80 20-85z" fill="#c2c2c2" />
    <path d="M233 170l95 15-5 32-93-15z" fill="#cdd0d6" />
    <path d="M201 187l151 25M236 71l141 23-25 118-5 80" stroke="#3b3b3b" strokeWidth="3" fill="none" strokeDasharray="18 10" />
    <g fontFamily="Liberation Sans" fontWeight="bold" fill="#454545" letterSpacing="0">
      <text transform="translate(259 150) skewY(6) skewX(-8)" fontSize="35" textLength="62" lengthAdjust="spacingAndGlyphs">TOP</text>
      <text transform="translate(225 246) skewY(6)" fontSize="27" textLength="104" lengthAdjust="spacingAndGlyphs">FRONT</text>
    </g>
    <g fontFamily="Liberation Sans" fontWeight="bold" fill="#dcdcdc" letterSpacing="0">
      <text transform="translate(98 215) skewY(6) skewX(-12)" fontSize="52" textLength="56" lengthAdjust="spacingAndGlyphs">W</text>
      <text transform="translate(438 280) skewX(-6)" fontSize="56" textLength="40" lengthAdjust="spacingAndGlyphs">E</text>
      <text transform="translate(224 410) skewX(-4)" fontSize="64" textLength="46" lengthAdjust="spacingAndGlyphs">S</text>
    </g>
    <rect x="220" y="445" width="142" height="52" rx="10" fill="#c9c9d9" stroke="#e6e6ee" strokeWidth="3" />
    <text x="233" y="479" fontFamily="Liberation Sans" fontSize="31" fill="#55565f" textLength="70">WCS</text>
    <path d="M323 464h24l-12 12z" fill="none" stroke="#9a9aa6" strokeWidth="2.500" />
  </svg>
);

const NavBar = () => (
  <svg width="32" height="212" viewBox="0 0 96 636" fill="none" className="absolute left-[1884px] top-[212px] rounded-[3px] bg-[#85888d] shadow-[0_0_0_1px_#14181e]">
    <g stroke="#55585e" strokeWidth="3">
      <circle cx="78" cy="15" r="10" /><path d="M73 10l10 10M83 10L73 20" />
      <path d="M47 58h33v32a32 32 0 1 1-33-32z" /><circle cx="48" cy="90" r="18" /><path d="M36 104l-11 9M60 104l11 9" />
      <path d="M30 238l-16-20q3-7 12 1l8 7-9-28q4-6 8 2l8 20-3-31q5-6 8 0l3 29 4-31q5-5 8 1l-1 32 9-23q6-3 6 3l-9 38-7 12H36z" />
      <path d="M14 272l44 42M58 272l-44 42" /><path d="M14 283v-12h12M46 271h12v12M14 302v12h12" strokeWidth="5" />
      <circle cx="59" cy="314" r="14" /><path d="M69 324l13 10" strokeWidth="8" />
      <path d="M41 446v-48h-7l12-15 12 15h-6v48z" /><path d="M36 412c-34 6-24 16 0 18M56 410c34 6 30 20-4 20" /><path d="M36 424l-12 6 12 8z" fill="#55585e" />
      <path d="M14 509h16v18H14zM38 509h16v18H38zM62 509h16v18H62zM14 536h48v38H14z" /><path d="M28 544l20 12-20 12z" fill="#55585e" />
      <circle cx="78" cy="618" r="10" /><path d="M72 616h12l-6 6z" />
    </g>
    <path d="M42 148h16l-8 8zM42 358h16l-8 8zM42 473h16l-8 8z" fill="#55585e" />
  </svg>
);

const CommandLine = () => (
  <div className="flex h-[60px] bg-[#2c333f] pt-px">
    <div className="flex w-[25px] flex-col items-center gap-[8px] pt-[4px]">
      <svg width="17" height="5">{[0, 3, 6, 9, 12, 15].map((x) => <g key={x} fill={W}><rect x={x} width="2" height="2" /><rect x={x} y="3" width="2" height="2" /></g>)}</svg>
      <svg width="10" height="10" className=""><path d="M1 1l8 8M9 1L1 9" stroke={W} strokeWidth="1.800" /></svg>
      <svg width="17" height="17" fill="none" className="mt-[3px]"><path d="M1.500 15L9 8.500" stroke={W} strokeWidth="3" /><path d="M12 1.500a4 4 0 1 0 4 4l-3 1-2-2z" fill={W} /></svg>
    </div>
    <div className="flex flex-1 flex-col font-['DejaVu_Sans_Mono',monospace] text-[11.400px] tracking-normal">
      <div className="h-[37px] bg-[#c8c8c8] pl-[2px] pt-[6px] leading-[15px] text-[#0c0c0c]">
        <p>Command:</p>
        <p>Command:</p>
      </div>
      <div className="mt-px flex h-[20px] items-center bg-white pl-[4px] text-[11.500px] italic text-[#757575]">
        <svg width="16" height="12" fill="none"><rect x=".5" y=".5" width="15" height="11" stroke="#555" /><path d="M0 1.500h16" stroke="#555" strokeWidth="2" /><path d="M2 4l3 2.500L2 9M6 9h4" stroke="#555" /></svg>
        <svg width="8" height="5" className="ml-[2px] mr-[6px]"><path d="M0 0h8L4 4.500z" fill="#555" /></svg>
        Type a command
      </div>
    </div>
  </div>
);

const LayoutTabs = () => (
  <div className="flex h-[30px] bg-[#222831] pl-[8px] text-[#dfe2e6]">
    <span className="flex h-[24px] w-[69px] items-center bg-[#3b4453] pl-[17px] font-bold text-white [clip-path:polygon(14%_0,100%_0,87%_100%,0_100%)]">Model</span>
    <span className="ml-[7px] flex h-[24px] w-[50px] items-center tracking-[-0.150px]">Layout1</span>
    <Slash c="mt-[4px]" />
    <span className="ml-[8px] flex h-[24px] w-[50px] items-center tracking-[-0.150px]">Layout2</span>
    <Slash c="mt-[4px]" />
    <svg width="12" height="24" className="ml-[10px] mr-[10px]"><path d="M0 12h12M6 6v12" stroke={W} strokeWidth="1.800" /></svg>
    <Slash c="mt-[4px]" />
  </div>
);

const Seg = ({ w, children, on }: { w: string; children?: React.ReactNode; on?: boolean }) => (
  <div className={`${w} flex h-[21px] shrink-0 items-center pt-[2px] ${on ? "bg-[#5586bd]" : "bg-[#3b4453]"}`}>{children}</div>
);
const SCell = ({ w, children }: { w: string; children: React.ReactNode }) => <span className={`${w} flex shrink-0 items-center justify-center`}>{children}</span>;

const StatusBar = () => (
  <footer className="flex h-[21px] bg-[#222831] pl-[2px] text-[12px] text-[#e8eaed]">
    <Seg w="w-[1307px]" />
    <span className="w-[4px]" />
    <Seg w="w-[47px]"><span className="w-full text-center text-[12px] tracking-[-0.200px]">MODEL</span></Seg>
    <span className="w-[4px]" />
    <Seg w="w-[22px]" on><SCell w="w-[22px]"><I><L d="M3.500 0v16M8 0v16M12.500 0v16M0 3.500h16M0 8h16M0 12.500h16" c="#fff" w={1.200} /></I></SCell></Seg>
    <Seg w="w-[41px]"><SCell w="w-[25px]"><I>{[2, 6, 10, 14].map((x) => [3, 8, 13].map((y) => <rect key={x + "-" + y} x={x - 1} y={y - 1} width="1.800" height="1.800" fill={W} />))}</I></SCell><SCell w="w-[16px]"><Down big /></SCell></Seg>
    <span className="w-[4px]" />
    <Seg w="w-[22px]" on><SCell w="w-[22px]"><I><L d="M3.500 1v6M.5 4h6" c="#fff" w={1.200} /><rect x="6" y="10" width="10" height="4.500" fill="#fff" /></I></SCell></Seg>
    <span className="w-[2px]" />
    <Seg w="w-[80px]">
      <SCell w="w-[24px]"><I><circle cx="6.500" cy="9" r="5.500" stroke={W} strokeWidth="1.200" /><L d="M6.500 9h9.500M6.500 9l7-8" w={1.200} /><L d="M10.500 12l1.500-3-1.500-3.500" /></I></SCell>
      <SCell w="w-[16px]"><Down big /></SCell>
      <SCell w="w-[22px]"><I><L d="M8 0v16" c={G} w={1.200} /><L d="M2 1l13 14" c={R} w={1.200} /><rect x="7" y="7" width="2.500" height="2.500" fill={W} /></I></SCell>
      <SCell w="w-[18px]"><Down big /></SCell>
    </Seg>
    <span className="w-[2px]" />
    <Seg w="w-[22px]" on><SCell w="w-[22px]"><I><path d="M5 3h10.300v12.300H2.500V5" stroke="#fff" strokeWidth="1.300" /><rect x=".6" y=".6" width="4" height="4" fill="#5586bd" stroke="#fff" strokeWidth="1.200" /></I></SCell></Seg>
    <Seg w="w-[17px]"><SCell w="w-[17px]"><Down big /></SCell></Seg>
    <span className="w-[3px]" />
    <Seg w="w-[41px]"><SCell w="w-[24px]"><I><path d="M2 5h10v10H2zM2 5l3-4h10l-3 4M15 1v10l-3 4" stroke={W} /><g fill={B}><rect x="0" y="3.500" width="4" height="4" /><rect x="10" y="3.500" width="4" height="4" /><rect x="0" y="12" width="4" height="4" /><rect x="10" y="12" width="4" height="4" /></g></I></SCell><SCell w="w-[17px]"><Down big /></SCell></Seg>
    <Seg w="w-[22px]" on><SCell w="w-[22px]"><I><path d="M8 2l6 4.500v6L8 15l-6-2.500v-6zM8 2v8M8 9.500l6 3M8 9.500l-6 3" stroke="#fff" strokeWidth="1.200" /><rect x="6.500" y=".5" width="3" height="3" fill="#5586bd" stroke="#fff" /><rect x="1" y="11" width="3" height="3" fill="#5586bd" stroke="#fff" /><rect x="12" y="11" width="3" height="3" fill="#5586bd" stroke="#fff" /></I></SCell></Seg>
    <Seg w="w-[17px]"><SCell w="w-[17px]"><Down big /></SCell></Seg>
    <span className="w-[3px]" />
    <Seg w="w-[58px]"><SCell w="w-[24px]"><I><F d="M8 0l2.500 10L15 16l-5.500-3.500L8 9.500l-1.500 3L1 16l4.500-6z" /></I></SCell><span className="w-[21px] text-center text-[12px] tracking-[-0.500px]">1:1</span><Down big /></Seg>
    <span className="w-[3px]" />
    <Seg w="w-[66px]">
      <SCell w="w-[24px]"><I><circle cx="8" cy="8" r="4.200" stroke={W} strokeWidth="3.200" /><circle cx="8" cy="8" r="6.800" stroke={W} strokeWidth="2.200" strokeDasharray="2.700 2.640" /></I></SCell>
      <SCell w="w-[18px]"><Down big /></SCell>
      <SCell w="w-[22px]"><I><L d="M8 0v16M0 8h16" w={1.800} /></I></SCell>
    </Seg>
    <span className="w-[2px]" />
    <Seg w="w-[24px]"><SCell w="w-[24px]"><I><path d="M2.500.500h11v15h-11z" stroke={W} /><L d="M7 5h5M7 8.500h5M7 12h5" w={1.500} /><L d="M4 5h2M4 8.500h2M4 12h2" w={1.500} /></I></SCell></Seg>
    <span className="w-[3px]" />
    <Seg w="w-[46px]">
      <SCell w="w-[22px]"><I><circle cx="8.500" cy="6.500" r="6" fill="#3f74ae" /><L d="M3 0v9M0 3h8" c="#cfe6fb" w={1.300} /><rect x="1" y="10" width="6" height="6" fill="#f0b429" /><L d="M7 11l3 3.500 5.500-7" c="#4fbf5b" w={2.400} /></I></SCell>
      <SCell w="w-[25px]"><I><rect width="14" height="13" fill="#d9d4ce" /><L d="M0 9l4-6 4 6 3-5 3 4" c="#3c6c88" w={1.300} /><F d="M12 7l4.500 9h-9z" c="#f0a87a" /><L d="M12 10v3" c="#fff" /></I></SCell>
    </Seg>
    <span className="w-[3px]" />
    <Seg w="w-[52px]">
      <SCell w="w-[30px]"><I><rect x=".5" y="2.500" width="15" height="11" stroke={W} strokeWidth="1.200" /><path d="M9 7l3-3M4 12l3-3" stroke={W} /><F d="M9.500 4.500H13V8zM3 8.500V12h3.500z" /></I></SCell>
      <SCell w="w-[18px]"><I><L d="M0 2.500h16M0 8h16M0 13.500h16" w={2} /></I></SCell>
    </Seg>
  </footer>
);

export default function App() {
  return (
    <div className="flex h-[1027px] w-[1919px] flex-col overflow-hidden bg-[#222831] font-['Noto_Sans',sans-serif] text-[11.500px] leading-[15px] tracking-[-0.250px]">
      <TitleBar />
      <nav className="flex h-[23px] items-center border-b border-[#3f4753] pl-[14px] pt-[2px] text-[#b4b8bf]">
        {menus.map(([t, w]) => <span key={t} className={`${w} whitespace-nowrap`}>{t}</span>)}
        <span className="ml-auto mr-[2px]"><WinButtons gap="gap-[7px]" /></span>
      </nav>
      <div className="flex h-[24px] items-end pl-[4px] text-[#aeb3ba]">
        <span className="mr-[11px] flex h-[20px] w-[54px] items-center bg-[#3b4453] pb-[2px] pl-[9px] tracking-normal text-white">Home</span>
        {tabs.map(([t, w]) => <span key={t + w} className={`${w} flex h-[20px] items-center whitespace-nowrap pb-[2px] tracking-[-0.200px]`}>{t}</span>)}
        <span className="flex h-[20px] items-center gap-[4px] pt-[2px]">
          <svg width="15" height="8"><rect width="15" height="8" fill="#eee" /><path d="M5 5.500h5L7.500 3z" fill="#555" /></svg>
          <Down />
        </span>
      </div>
      <Ribbon />
      <div className="flex h-[27px] items-end pl-[9px] text-[#e3e6ea]">
        <Slash c="mb-[5px]" />
        <span className="ml-[8px] flex h-[24px] w-[32px] items-center pb-[2px]">Start</span>
        <span className="flex h-[24px] w-[87px] items-center bg-[#3b4453] pl-[16px] font-bold text-white [clip-path:polygon(10%_0,100%_0,90%_100%,0_100%)]">
          <span className="w-[50px] whitespace-nowrap pb-[2px]">coleen*</span>
          <svg width="9" height="9"><path d="M1 1l7 7M8 1L1 8" stroke="#b9bdc4" strokeWidth="1.700" /></svg>
        </span>
        <svg width="12" height="24" className="ml-[9px] mr-[11px]"><path d="M0 12h12M6 6v12" stroke={W} strokeWidth="1.800" /></svg>
        <Slash c="mb-[5px]" />
      </div>
      <div className="h-[4px] bg-[#3b4453]" />
      <main className="relative h-[709px]">
        <Drawing />
        <span className="absolute left-[3px] top-[6px] whitespace-nowrap text-[11.800px] tracking-[-0.100px] text-white">[−][Custom View][2D Wireframe]</span>
        <ViewCube />
        <NavBar />
      </main>
      <div className="h-[4px] bg-[#3b4453]" />
      <CommandLine />
      <div className="h-[4px] bg-[#3b4453]" />
      <LayoutTabs />
      <StatusBar />
    </div>
  );
}
